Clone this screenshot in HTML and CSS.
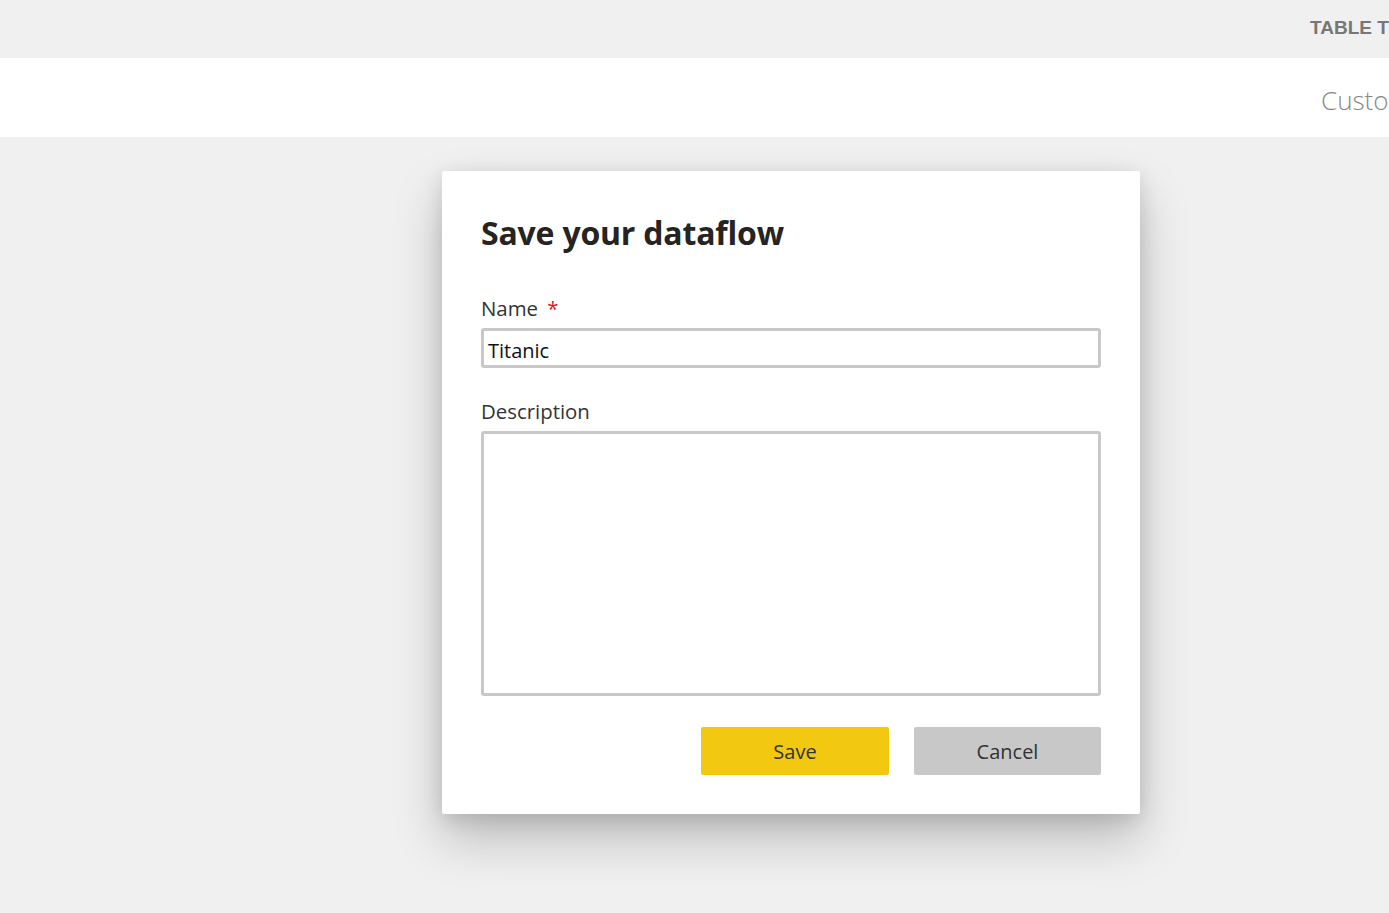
FILE: index.html
```html
<!DOCTYPE html>
<html>
<head>
<meta charset="utf-8">
<link rel="stylesheet" href="styles.css">
</head>
<body>
<div class="topbar"><span class="toplabel">TABLE TOOLS</span></div>
<div class="ribbon"><span class="ribbonlabel">Customize</span></div>
<div class="stage">
  <div class="dialog">
    <h1 class="title">Save your dataflow</h1>
    <label class="label">Name <span class="req">*</span></label>
    <div class="input">Titanic</div>
    <label class="label label-desc">Description</label>
    <div class="textarea"></div>
    <div class="actions">
      <button class="btn btn-save">Save</button>
      <button class="btn btn-cancel">Cancel</button>
    </div>
  </div>
</div>
</body>
</html>
```
FILE: styles.css
```css
html, body {
  margin: 0;
  padding: 0;
  width: 1389px;
  height: 913px;
  overflow: hidden;
  background: #f0f0f0;
  font-family: "Open Sans", "Noto Sans", sans-serif;
}
.topbar {
  height: 58px;
  background: #f0f0f0;
  display: flex;
  justify-content: flex-start;
  align-items: center;
  padding-left: 1310px;
  white-space: nowrap;
  overflow: hidden;
}
.toplabel {
  font-family: "Liberation Sans", Arial, sans-serif;
  font-weight: bold;
  font-size: 19px;
  color: #777;
  margin-bottom: 2px;
}
.ribbon {
  height: 79px;
  box-sizing: border-box;
  padding-top: 4px;
  background: #fff;
  display: flex;
  align-items: center;
  padding-left: 1321px;
  white-space: nowrap;
  overflow: hidden;
}
.ribbonlabel {
  font-size: 26px;
  font-weight: 300;
  color: #888;
}
.stage {
  padding-top: 34px;
  padding-left: 442px;
}
.dialog {
  width: 698px;
  height: 643px;
  box-sizing: border-box;
  padding: 40px 39px 0 39px;
  background: #fff;
  border-radius: 2px;
  box-shadow: 0 25px 50px rgba(0,0,0,0.22), 0 5px 20px rgba(0,0,0,0.12);
  display: flex;
  flex-direction: column;
}
.title {
  margin: 0;
  font-size: 32px;
  font-weight: 700;
  color: #252423;
  line-height: 44px;
  letter-spacing: -0.2px;
}
.label {
  margin-top: 39px;
  font-size: 20.4px;
  color: #333;
  line-height: 28px;
}
.req {
  color: #e81123;
  margin-left: 4px;
}
.input {
  margin-top: 6px;
  height: 40px;
  box-sizing: border-box;
  border: 3px solid #c8c8c8;
  border-radius: 3px;
  padding-left: 4px;
  padding-top: 2px;
  font-size: 20px;
  line-height: 36px;
  color: #111;
}
.label-desc {
  margin-top: 29px;
}
.textarea {
  margin-top: 6px;
  height: 265px;
  box-sizing: border-box;
  border: 3px solid #c8c8c8;
  border-radius: 3px;
}
.actions {
  margin-top: 31px;
  display: flex;
  justify-content: flex-end;
  gap: 25px;
}
.btn {
  height: 48px;
  border: none;
  border-radius: 2px;
  font-family: inherit;
  font-size: 20px;
  color: #333;
  padding: 0;
  line-height: 50px;
}
.btn-save {
  width: 188px;
  background: #f2c811;
}
.btn-cancel {
  width: 187px;
  background: #c8c8c8;
}
```
